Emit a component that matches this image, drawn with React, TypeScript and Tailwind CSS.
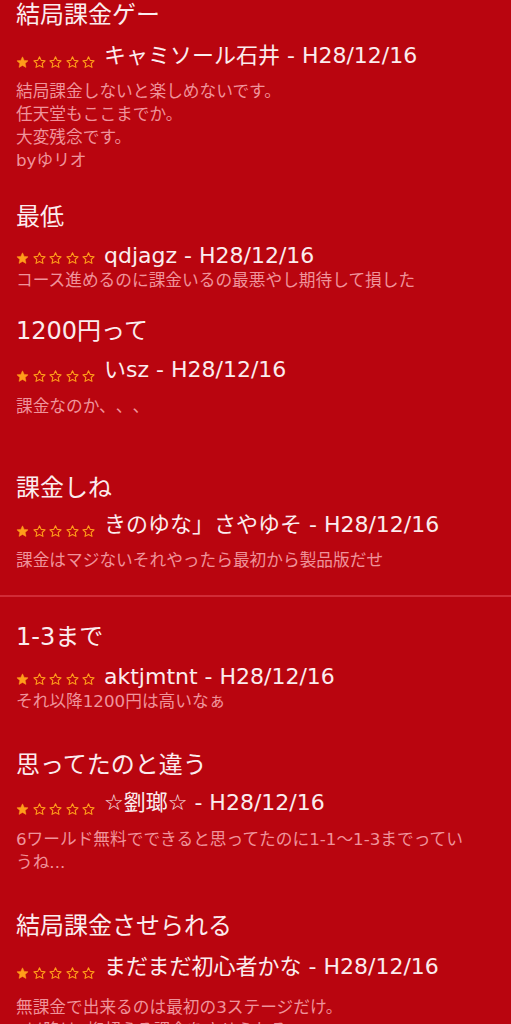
type Review = {
  title: string;
  author: string;
  body: string[];
  gap: string; // space above the title
  metaTop: string;
  bodyTop: string;
  lift?: boolean;
};

const reviews: Review[] = [
  {
    title: "結局課金ゲー",
    author: "キャミソール石井 - H28/12/16",
    body: ["結局課金しないと楽しめないです。", "任天堂もここまでか。", "大変残念です。", "byゆリオ"],
    gap: "mt-0",
    metaTop: "mt-[18px]",
    bodyTop: "mt-[8px]",
    lift: true,
  },
  {
    title: "最低",
    author: "qdjagz - H28/12/16",
    body: ["コース進めるのに課金いるの最悪やし期待して損した"],
    gap: "mt-[30px]",
    metaTop: "mt-[12px]",
    bodyTop: "mt-[1px]",
  },
  {
    title: "1200円って",
    author: "いsz - H28/12/16",
    body: ["課金なのか、、、"],
    gap: "mt-[24px]",
    metaTop: "mt-[16px]",
    bodyTop: "mt-[9px]",
    lift: true,
  },
  {
    title: "課金しね",
    author: "きのゆな」さやゆそ - H28/12/16",
    body: ["課金はマジないそれやったら最初から製品版だせ"],
    gap: "mt-[55px]",
    metaTop: "mt-[14px]",
    bodyTop: "mt-[8px]",
    lift: true,
  },
  {
    title: "1-3まで",
    author: "aktjmtnt - H28/12/16",
    body: ["それ以降1200円は高いなぁ"],
    gap: "mt-[25px]",
    metaTop: "mt-[13px]",
    bodyTop: "mt-[1px]",
  },
  {
    title: "思ってたのと違う",
    author: "☆劉瑯☆ - H28/12/16",
    body: ["6ワールド無料でできると思ってたのに1-1〜1-3までってい", "うね..."],
    gap: "mt-[37px]",
    metaTop: "mt-[15px]",
    bodyTop: "mt-[9px]",
    lift: true,
  },
  {
    title: "結局課金させられる",
    author: "まだまだ初心者かな - H28/12/16",
    body: ["無課金で出来るのは最初の3ステージだけ。", "4以降は4桁超える課金をさせられる"],
    gap: "mt-[37px]",
    metaTop: "mt-[18px]",
    bodyTop: "mt-[13px]",
    lift: true,
  },
];

function Star({ filled }: { filled: boolean }) {
  return (
    <svg width="13" height="13" viewBox="0 0 24 24">
      <path
        d="M12 1.5l3.1 6.6 7.2.8-5.4 4.9 1.5 7.2L12 17.4 5.6 21l1.5-7.2L1.7 8.9l7.2-.8z"
        fill={filled ? "#ff9d1a" : "none"}
        stroke="#ff9d1a"
        strokeWidth={filled ? 1 : 2}
        strokeLinejoin="round"
      />
    </svg>
  );
}

function ReviewItem({ r }: { r: Review }) {
  return (
    <div className={r.gap}>
      <h2 className="text-[24px] leading-[30px] text-[#fbecee]">{r.title}</h2>
      <div className={`flex items-end ${r.metaTop}`}>
        <div className="flex gap-[3.5px] mb-[3px]">
          {[0, 1, 2, 3, 4].map((i) => (
            <Star key={i} filled={i === 0} />
          ))}
        </div>
        <span className={`ml-[9px] text-[22px] leading-[24px] text-[#fbecee] whitespace-nowrap ${r.lift ? "relative -top-[4px]" : ""}`}>
          {r.author}
        </span>
      </div>
      <div className={`${r.bodyTop} text-[16.7px] leading-[23px] text-[#ef939b]`}>
        {r.body.map((line, i) => (
          <p key={i}>{line}</p>
        ))}
      </div>
    </div>
  );
}

export default function App() {
  return (
    <div
      className="w-[511px] h-[1024px] overflow-hidden bg-[#b9050f] [text-spacing-trim:space-all] [font-feature-settings:'chws'_0]"
      style={{ fontFamily: '"DejaVu Sans", "Noto Sans CJK JP", sans-serif' }}
    >
      <div className="pl-4 pr-4">
        {reviews.slice(0, 4).map((r, i) => (
          <ReviewItem key={i} r={r} />
        ))}
      </div>
      <div className="mt-[23px] h-[2px] bg-[#d12b36]" />
      <div className="pl-4 pr-4">
        {reviews.slice(4).map((r, i) => (
          <ReviewItem key={i} r={r} />
        ))}
      </div>
    </div>
  );
}
